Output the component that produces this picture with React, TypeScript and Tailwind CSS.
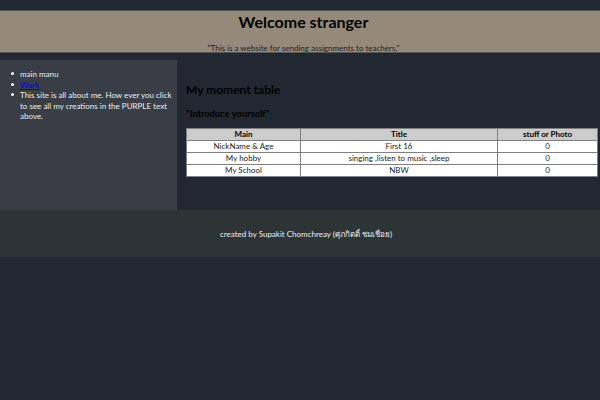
export default function App() {
  const rows = [
    ['NickName & Age', 'First 16', '0'],
    ['My hobby', 'singing ,listen to music ,sleep', '0'],
    ['My School', 'NBW', '0'],
  ]

  return (
    <div className="min-h-[400px] bg-[#222831] pt-[10px] font-['Lato','Noto_Sans_CJK_SC',sans-serif] text-[8px] leading-[10.5px] text-black">
      <header className="h-[43px] border-y border-[#555] bg-[#94897a] pl-[7px] text-center">
        <h1 className="text-[16px] leading-[21px] font-bold">Welcome stranger</h1>
        <p className="pt-[11px] text-[#222]">"This is a website for sending assignments to teachers."</p>
      </header>

      <div className="mt-[7px] flex h-[150px]">
        <aside className="w-[177px] bg-[#393e46] pt-[9px] pl-[11px] text-[#eeeeee]">
          <ul>
            <li className="flex gap-[6px]">
              <span className="mt-[3px] h-[3px] w-[3px] shrink-0 rounded-full bg-white" />
              main manu
            </li>
            <li className="flex gap-[6px]">
              <span className="mt-[3px] h-[3px] w-[3px] shrink-0 rounded-full bg-white" />
              <a href="#" className="text-[#0000ee] underline">Work</a>
            </li>
            <li className="flex gap-[6px]">
              <span className="mt-[3px] h-[3px] w-[3px] shrink-0 rounded-full bg-white" />
              <span>This site is all about me. How ever you click to see all my creations in the PURPLE text above.</span>
            </li>
          </ul>
        </aside>
        <main className="flex-1 pr-[2px] pl-[9px]">
          <h2 className="pt-[23px] text-[12px] leading-[14px] font-bold">My moment table</h2>
          <h3 className="pt-[11px] text-[9.36px] leading-[12px] font-bold">"Introduce yourself"</h3>
          <table className="mt-[8px] w-[412px] table-fixed border-collapse text-center">
            <thead>
              <tr className="h-[12px] bg-[#cccccc] font-bold">
                <th className="w-[114px] border border-[#808080]">Main</th>
                <th className="w-[197px] border border-[#808080]">Title</th>
                <th className="border border-[#808080]">stuff or Photo</th>
              </tr>
            </thead>
            <tbody>
              {rows.map((row) => (
                <tr key={row[0]} className="h-[12px] bg-white text-[#222]">
                  {row.map((cell, i) => (
                    <td key={i} className="border border-[#808080]">{cell}</td>
                  ))}
                </tr>
              ))}
            </tbody>
          </table>
        </main>
      </div>

      <footer className="h-[47px] bg-[#2d3436] pt-[19px] pl-[220px] text-[#eeeeee]">
        created by Supakit Chomchreay (ศุภกิตติ์ ชมเชื่อย)
      </footer>
    </div>
  )
}
